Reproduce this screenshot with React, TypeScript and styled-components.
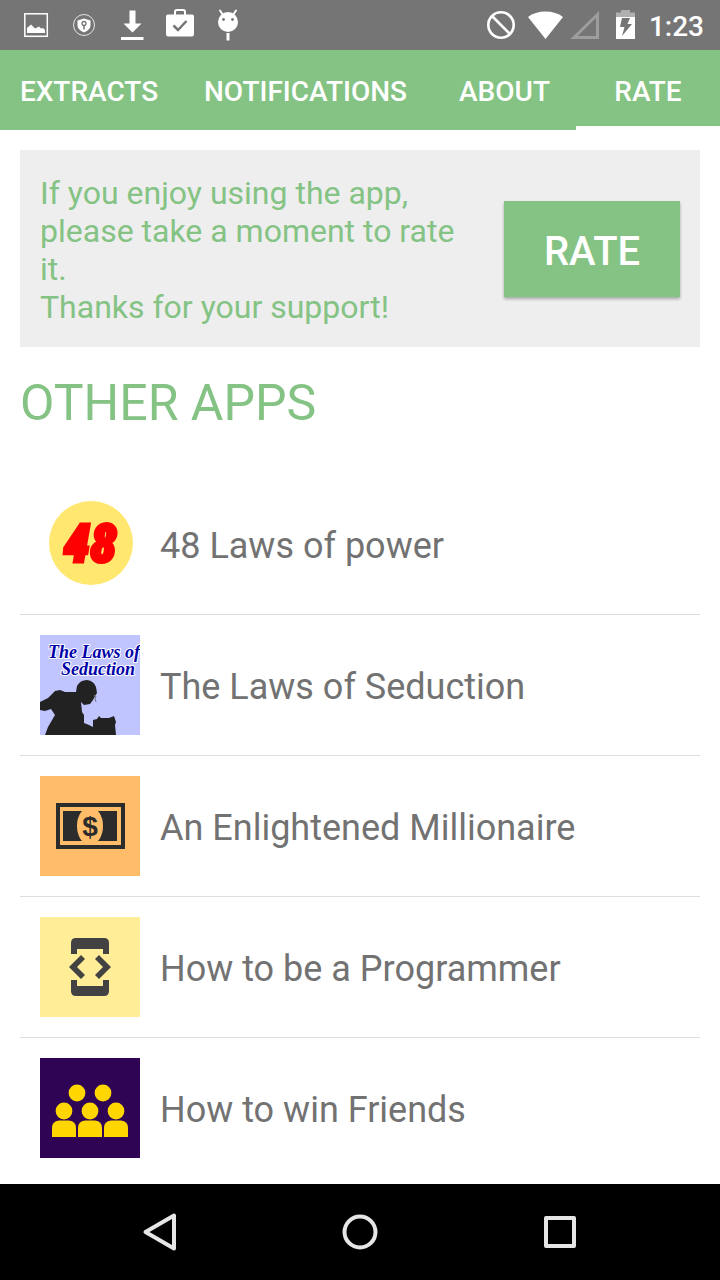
import React from "react";
import styled, { createGlobalStyle } from "styled-components";

const GREEN = "#84c384";

const GlobalStyle = createGlobalStyle`
  * {
    box-sizing: border-box;
  }
  body {
    margin: 0;
    background: #ffffff;
    font-family: Roboto, "Liberation Sans", sans-serif;
  }
`;

const Screen = styled.div`
  display: flex;
  flex-direction: column;
  min-height: 100vh;
`;

const StatusBar = styled.header`
  display: flex;
  justify-content: space-between;
  height: 50px;
  padding: 0 16px 0 12px;
  background: #757575;
`;

const StatusGroup = styled.div`
  display: flex;
  align-items: center;
`;

const StatusIcon = styled.svg<{ $width?: number }>`
  display: block;
  width: ${({ $width = 48 }) => $width}px;
  height: 50px;
`;

const Clock = styled.time`
  margin-left: 4px;
  padding-top: 4px;
  color: #ffffff;
  font-size: 28px;
  font-weight: 500;
  line-height: 46px;
`;

const TabBar = styled.nav`
  display: grid;
  grid-template-columns: 178fr 255fr 143fr 144fr;
  height: 80px;
  background: ${GREEN};
`;

const Tab = styled.button<{ $active?: boolean }>`
  padding: 8px 0 0;
  border: 0;
  border-bottom: 4px solid ${({ $active }) => ($active ? "#ffffff" : "transparent")};
  background: none;
  color: #ffffff;
  font: 500 28px/32px Roboto, "Liberation Sans", sans-serif;
  text-align: center;
`;

const Content = styled.main`
  flex: 1;
  padding: 20px 20px 5px;
`;

const RateCard = styled.section`
  display: flex;
  align-items: center;
  justify-content: space-between;
  gap: 20px;
  padding: 20px;
  background: #eeeeee;
`;

const RateText = styled.p`
  flex: 1;
  margin: 0;
  padding: 4px 0 1px;
  color: ${GREEN};
  font-size: 32px;
  line-height: 38px;
`;

const RateButton = styled.button`
  flex: none;
  width: 176px;
  height: 96px;
  padding: 6px 0 0;
  border: 0;
  background: ${GREEN};
  box-shadow: 0 2px 3px rgba(0, 0, 0, 0.3);
  color: #ffffff;
  font: 500 40px/48px Roboto, "Liberation Sans", sans-serif;
`;

const Heading = styled.h1`
  margin: 26px 0 41px;
  color: ${GREEN};
  font-size: 50px;
  font-weight: 400;
  line-height: 60px;
`;

const AppList = styled.ul`
  margin: 0;
  padding: 0;
  list-style: none;
`;

const AppItem = styled.li`
  & + & {
    border-top: 1px solid #dedede;
  }
`;

const AppLink = styled.a`
  display: flex;
  align-items: center;
  gap: 20px;
  padding: 20px;
  color: #727272;
  font-size: 36px;
  line-height: 44px;
  text-decoration: none;
`;

const AppIcon = styled.svg`
  display: block;
  flex: none;
  width: 100px;
  height: 100px;
`;

const AppName = styled.span`
  padding-top: 4px;
`;

const SystemNav = styled.nav`
  display: flex;
  height: 96px;
  padding: 0 60px;
  background: #000000;
`;

const SystemButton = styled.button`
  display: flex;
  flex: 1;
  align-items: center;
  justify-content: center;
  padding: 0;
  border: 0;
  background: none;
`;

const SystemIcon = styled.svg`
  width: 40px;
  height: 40px;
  fill: none;
  stroke: #e6e6e6;
  stroke-width: 4;
  stroke-linejoin: round;
`;

const PowerIcon = () => (
  <AppIcon viewBox="0 0 100 100" aria-hidden="true">
    <circle cx="51" cy="49" r="42" fill="#ffe770" />
    <text
      x="50"
      y="68"
      textAnchor="middle"
      fontFamily="'Roboto Condensed', Roboto, sans-serif"
      fontSize="54"
      fontWeight="900"
      fontStyle="italic"
      fill="#ff0000"
      stroke="#ff0000"
      strokeWidth="3"
    >
      48
    </text>
  </AppIcon>
);

const SeductionIcon = () => (
  <AppIcon viewBox="0 0 100 100" aria-hidden="true">
    <rect width="100" height="100" fill="#c0c4ff" />
    <g
      fontFamily="'Liberation Serif', serif"
      fontSize="18"
      fontWeight="700"
      fontStyle="italic"
      fill="#0000a8"
      stroke="#ffffff"
      strokeWidth="2"
      strokeLinejoin="round"
      paintOrder="stroke"
      textAnchor="middle"
    >
      <text x="54" y="23">The Laws of</text>
      <text x="58" y="40">Seduction</text>
    </g>
    <path
      fill="#222222"
      d="M0 67L8 63L15 56L20 55L25 57L36 57L37 51Q40 45 47 45Q54 46 56 52L57 58L55 61L53 65L50 69L44 70L41 67L42 77L44 80L44 88L49 90L53 92V85L57 84L59 81L61 83H69L74 81L76 87L75 90L76 100H5L8 92L15 80L11 74L5 76L0 75Z"
    />
    <path d="M54 60l2 1-1 3 1 3" fill="none" stroke="#777788" strokeWidth="1" />
  </AppIcon>
);

const MillionaireIcon = () => (
  <AppIcon viewBox="0 0 100 100" aria-hidden="true">
    <rect width="100" height="100" fill="#ffbd69" />
    <rect x="18" y="29" width="65" height="42" fill="none" stroke="#2c2c2c" strokeWidth="4" />
    <rect x="23" y="35" width="54" height="30" fill="#2c2c2c" />
    <ellipse cx="50" cy="50" rx="13" ry="19" fill="#ffbd69" />
    <text
      x="50"
      y="60"
      textAnchor="middle"
      fontFamily="'Liberation Sans', sans-serif"
      fontSize="28"
      fontWeight="700"
      fill="#2c2c2c"
    >
      $
    </text>
  </AppIcon>
);

const ProgrammerIcon = () => (
  <AppIcon viewBox="0 0 100 100" aria-hidden="true">
    <rect width="100" height="100" fill="#ffed98" />
    <g fill="#424242">
      <path d="M31 37V26Q31 21 36 21H64Q69 21 69 26V37H63V32H37V37Z" />
      <path d="M31 63V74Q31 79 36 79H64Q69 79 69 74V63H63V69H37V63Z" />
      <path d="M29 50L41 38L45 42L37 50L45 58L41 62Z" />
      <path d="M71 50L59 38L55 42L63 50L55 58L59 62Z" />
    </g>
  </AppIcon>
);

const FriendsIcon = () => (
  <AppIcon viewBox="0 0 100 100" aria-hidden="true">
    <rect width="100" height="100" fill="#2f0454" />
    <g fill="#ffd600">
      <circle cx="37" cy="35" r="8.4" />
      <circle cx="63" cy="35" r="8.4" />
      {[24, 50, 76].map((x) => (
        <g key={x}>
          <circle cx={x} cy="53" r="8.4" />
          <path d={`M${x - 12} 79v-9q0-7 7-7.500h10q7 .5 7 7.500v9z`} />
        </g>
      ))}
    </g>
  </AppIcon>
);

const apps = [
  { name: "48 Laws of power", Icon: PowerIcon },
  { name: "The Laws of Seduction", Icon: SeductionIcon },
  { name: "An Enlightened Millionaire", Icon: MillionaireIcon },
  { name: "How to be a Programmer", Icon: ProgrammerIcon },
  { name: "How to win Friends", Icon: FriendsIcon },
];

const tabs = ["EXTRACTS", "NOTIFICATIONS", "ABOUT", "RATE"];

const Notifications = () => (
  <StatusGroup>
    <StatusIcon viewBox="0 0 48 50" aria-hidden="true">
      <rect x="12.800" y="13.800" width="22.500" height="22.500" fill="none" stroke="#fff" strokeWidth="1.500" />
      <path d="M15 33v-5l4-3.500 4 4 2-1 2-1 2 2 2-.5 2 2v3z" fill="#fff" />
    </StatusIcon>
    <StatusIcon viewBox="0 0 48 50" aria-hidden="true">
      <circle cx="24" cy="25" r="10.500" fill="none" stroke="#e4e4e4" strokeWidth="1" />
      <path d="M24 18.500l6.500 2v5q0 4-6.500 7-6.500-3-6.500-7v-5z" fill="#fff" />
      <circle cx="24" cy="23.500" r="2" fill="none" stroke="#757575" strokeWidth="1.300" />
      <path d="M24 25.500v4" stroke="#757575" strokeWidth="1.500" />
    </StatusIcon>
    <StatusIcon viewBox="0 0 48 50" aria-hidden="true">
      <path d="M21.500 10.500h6v13h6l-9 9-9-9h6zM13 37h22.500v3H13z" fill="#fff" />
    </StatusIcon>
    <StatusIcon viewBox="0 0 48 50" aria-hidden="true">
      <path
        d="M12 14.500h6V12q0-3 3-3h6q3 0 3 3v2.500h6q2 0 2 2V34q0 2.500-2.500 2.500h-23Q10 36.500 10 34V16.500q0-2 2-2zm8 0h8V12q0-1-1-1h-6q-1 0-1 1z"
        fill="#fff"
      />
      <path d="M17.500 25.500l4.500 4.500 8.500-9" fill="none" stroke="#757575" strokeWidth="2.500" />
    </StatusIcon>
    <StatusIcon viewBox="0 0 48 50" aria-hidden="true">
      <circle cx="24" cy="22" r="10" fill="#fff" />
      <path d="M24 33v7.500" stroke="#fff" strokeWidth="3" />
      <path d="M19 15l-3-4.500M29 15l3-4.500" stroke="#fff" strokeWidth="2" strokeLinecap="round" />
      <circle cx="19.500" cy="19.500" r="1.400" fill="#757575" />
      <circle cx="28.500" cy="19.500" r="1.400" fill="#757575" />
    </StatusIcon>
  </StatusGroup>
);

const SystemStatus = () => (
  <StatusGroup>
    <StatusIcon viewBox="0 0 48 50" aria-hidden="true">
      <g fill="none" stroke="#fff" strokeWidth="2.600">
        <circle cx="24" cy="25" r="12.700" />
        <path d="M15 16l18 18" />
      </g>
    </StatusIcon>
    <StatusIcon $width={40} viewBox="0 0 40 50" aria-hidden="true">
      <path d="M3 17Q10 11.500 20.500 11.500T38 17L20.500 39z" fill="#fff" />
    </StatusIcon>
    <StatusIcon $width={40} viewBox="0 0 40 50" aria-hidden="true">
      <path d="M9 37.500L32.500 14.500v23z" fill="none" stroke="#9d9d9d" strokeWidth="3" />
    </StatusIcon>
    <StatusIcon $width={40} viewBox="0 0 40 50" aria-hidden="true">
      <path d="M11 12.500h5v-2.500h9v2.500h5v4.500H11z" fill="#b0b0b0" />
      <path d="M11 17h19v22H11z" fill="#fff" />
      <path d="M17 18h8l-2.500 6H27l-10 12 2.500-9H15z" fill="#757575" />
    </StatusIcon>
    <Clock dateTime="01:23">1:23</Clock>
  </StatusGroup>
);

export default function App() {
  return (
    <>
      <GlobalStyle />
      <Screen>
        <StatusBar>
          <Notifications />
          <SystemStatus />
        </StatusBar>
        <TabBar>
          {tabs.map((tab) => (
            <Tab key={tab} type="button" $active={tab === "RATE"}>
              {tab}
            </Tab>
          ))}
        </TabBar>
        <Content>
          <RateCard>
            <RateText>
              If you enjoy using the app, please take a moment to rate it.
              <br />
              Thanks for your support!
            </RateText>
            <RateButton type="button">RATE</RateButton>
          </RateCard>
          <Heading>OTHER APPS</Heading>
          <AppList>
            {apps.map(({ name, Icon }) => (
              <AppItem key={name}>
                <AppLink href="#">
                  <Icon />
                  <AppName>{name}</AppName>
                </AppLink>
              </AppItem>
            ))}
          </AppList>
        </Content>
        <SystemNav>
          <SystemButton type="button" aria-label="Back">
            <SystemIcon viewBox="0 0 40 40">
              <path d="M5.500 20L34 3.500v33z" />
            </SystemIcon>
          </SystemButton>
          <SystemButton type="button" aria-label="Home">
            <SystemIcon viewBox="0 0 40 40">
              <circle cx="20" cy="20" r="15.500" />
            </SystemIcon>
          </SystemButton>
          <SystemButton type="button" aria-label="Recent apps">
            <SystemIcon viewBox="0 0 40 40">
              <rect x="6" y="6" width="28" height="28" />
            </SystemIcon>
          </SystemButton>
        </SystemNav>
      </Screen>
    </>
  );
}
